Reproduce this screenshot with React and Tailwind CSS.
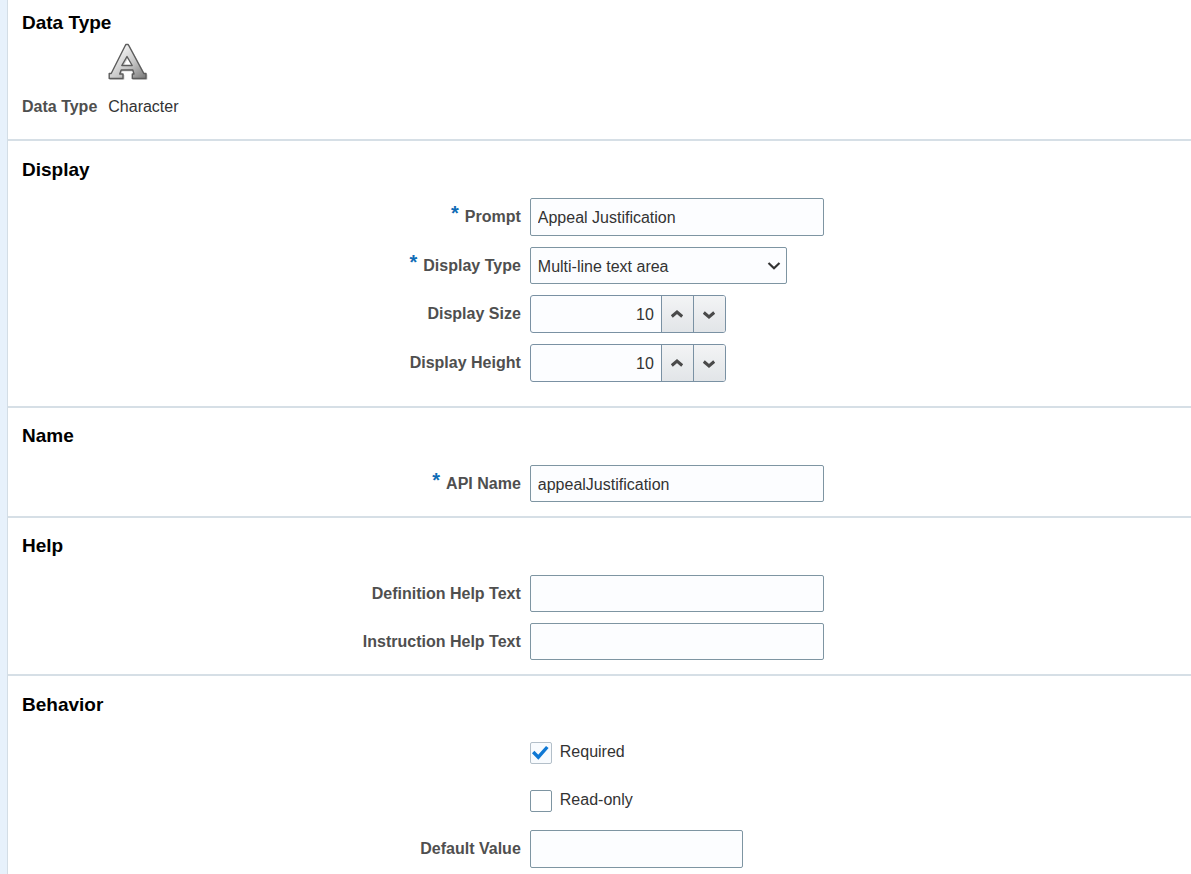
import { useState } from "react"

const inputClass =
  "block rounded-[2px] border border-[#7e95a2] bg-[#fcfdff] px-[7px] pt-0.5 text-base text-[#333333] outline-none"

function Section({ title, className, children }) {
  return (
    <section className={`border-b-2 border-[#d6dfe6] pl-3.5 last:border-b-0 ${className}`}>
      <h2 className="text-[19px] leading-6 font-bold text-black">{title}</h2>
      {children}
    </section>
  )
}

function Field({ id, label, required, children }) {
  return (
    <div className="grid grid-cols-[43fr_57fr] items-center gap-x-[9px]">
      <div className="text-right leading-6 font-bold text-[#4f4f4f]">
        {required ? <span className="mr-1.5 align-[2px] text-xl leading-4 text-[#0f6cb6]">*</span> : null}
        {label ? <label htmlFor={id}>{label}</label> : null}
      </div>
      <div className="flex items-center">{children}</div>
    </div>
  )
}

function Chevron({ up }) {
  return (
    <svg viewBox="0 0 14 10" className="h-2.5 w-3.5" fill="none" stroke="#4a4a4a" strokeWidth="3">
      <path d={up ? "M1.8 7.5 7 3l5.2 4.5" : "M1.8 3.5 7 8l5.2-4.5"} />
    </svg>
  )
}

function Spinner({ id, label, value, onChange }) {
  const buttonClass =
    "flex w-8 items-center justify-center border-l border-[#7a91a3] bg-linear-to-b from-[#f3f4f5] to-[#e2e5e8]"

  return (
    <div className="flex h-[38px] overflow-hidden rounded-[3px] border border-[#7a91a3] bg-[#fcfdff]">
      <input
        id={id}
        type="text"
        inputMode="numeric"
        className="w-[130px] px-[7px] pt-0.5 text-right text-base text-[#333333] outline-none"
        value={value}
        onChange={(event) => onChange(Number(event.target.value) || 0)}
      />
      <button type="button" aria-label={`Increase ${label}`} className={buttonClass} onClick={() => onChange(value + 1)}>
        <Chevron up />
      </button>
      <button type="button" aria-label={`Decrease ${label}`} className={buttonClass} onClick={() => onChange(value - 1)}>
        <Chevron />
      </button>
    </div>
  )
}

function Checkbox({ id, label, checked, onChange }) {
  return (
    <div className="flex h-[37px] items-center gap-2">
      <span className="relative size-[22px]">
        <input
          id={id}
          type="checkbox"
          className="peer block size-[22px] appearance-none rounded-[2px] border border-[#7e95a2] bg-white checked:border-[#b3bfc9] checked:bg-[#f8fbfe]"
          checked={checked}
          onChange={(event) => onChange(event.target.checked)}
        />
        <svg
          viewBox="0 0 22 22"
          className="pointer-events-none absolute inset-0 hidden size-[22px] peer-checked:block"
          fill="none"
          stroke="#0f78d4"
          strokeWidth="3.4"
        >
          <path d="M3.2 10 8.3 15.2 17.3 5" />
        </svg>
      </span>
      <label htmlFor={id} className="pb-0.5 leading-6 text-[#333333]">
        {label}
      </label>
    </div>
  )
}

function CharacterIcon() {
  return (
    <svg viewBox="0 0 40 40" className="size-10" aria-hidden="true">
      <defs>
        <linearGradient id="letterFill" x1="0" y1="0" x2="1" y2="1">
          <stop offset="0.2" stopColor="#f4f4f4" />
          <stop offset="0.6" stopColor="#c4c4c4" />
          <stop offset="1" stopColor="#777777" />
        </linearGradient>
      </defs>
      <g fillRule="evenodd" strokeLinejoin="round">
        <path
          d="M17.8 1.5H20.2L35.8 30.5H38V35.5H24.3V31H26L24.8 27H13.2L11.7 31H15V35.5H1.2V30.5H3.2ZM19 13.5 13.8 22.5H24.2Z"
          transform="translate(1 1)"
          fill="#cccccc"
          stroke="#d4d4d4"
        />
        <path
          d="M17.8 1.5H20.2L35.8 30.5H38V35.5H24.3V31H26L24.8 27H13.2L11.7 31H15V35.5H1.2V30.5H3.2ZM19 13.5 13.8 22.5H24.2Z"
          fill="url(#letterFill)"
          stroke="#5c5c5c"
          strokeWidth="1.4"
        />
      </g>
    </svg>
  )
}

function App() {
  const [prompt, setPrompt] = useState("Appeal Justification")
  const [displayType, setDisplayType] = useState("Multi-line text area")
  const [displaySize, setDisplaySize] = useState(10)
  const [displayHeight, setDisplayHeight] = useState(10)
  const [apiName, setApiName] = useState("appealJustification")
  const [definitionHelp, setDefinitionHelp] = useState("")
  const [instructionHelp, setInstructionHelp] = useState("")
  const [required, setRequired] = useState(true)
  const [readOnly, setReadOnly] = useState(false)
  const [defaultValue, setDefaultValue] = useState("")

  return (
    <div className="flex min-h-screen bg-white font-['Liberation_Sans',Arial,sans-serif] text-base">
      <div className="w-2 shrink-0 border-r border-[#d3dde5] bg-[#e7f1fb]" />
      <main className="min-w-0 flex-1">
        <Section title="Data Type" className="pt-[11px] pb-5">
          <dl className="mt-2 flex items-end gap-[11px] leading-6">
            <dt className="font-bold text-[#4f4f4f]">Data Type</dt>
            <dd className="text-[#333333]">
              <CharacterIcon />
              <p className="mt-3">Character</p>
            </dd>
          </dl>
        </Section>

        <Section title="Display" className="pt-[17px] pb-6">
          <div className="mt-4 flex flex-col gap-[11px]">
            <Field id="prompt" label="Prompt" required>
              <input
                id="prompt"
                type="text"
                className={`${inputClass} h-[38px] w-[294px]`}
                value={prompt}
                onChange={(event) => setPrompt(event.target.value)}
              />
            </Field>
            <Field id="displayType" label="Display Type" required>
              <div className="relative">
                <select
                  id="displayType"
                  className={`${inputClass} h-[37px] w-[257px] appearance-none`}
                  value={displayType}
                  onChange={(event) => setDisplayType(event.target.value)}
                >
                  <option>Multi-line text area</option>
                  <option>Simple text box</option>
                </select>
                <svg
                  viewBox="0 0 14 10"
                  className="pointer-events-none absolute top-3.5 right-1.5 h-2.5 w-3.5"
                  fill="none"
                  stroke="#333333"
                  strokeWidth="2.2"
                >
                  <path d="M1.5 2 7 7.2 12.5 2" />
                </svg>
              </div>
            </Field>
            <Field id="displaySize" label="Display Size">
              <Spinner id="displaySize" label="Display Size" value={displaySize} onChange={setDisplaySize} />
            </Field>
            <Field id="displayHeight" label="Display Height">
              <Spinner id="displayHeight" label="Display Height" value={displayHeight} onChange={setDisplayHeight} />
            </Field>
          </div>
        </Section>

        <Section title="Name" className="pt-4 pb-3.5">
          <div className="mt-[17px]">
            <Field id="apiName" label="API Name" required>
              <input
                id="apiName"
                type="text"
                className={`${inputClass} h-[37px] w-[294px]`}
                value={apiName}
                onChange={(event) => setApiName(event.target.value)}
              />
            </Field>
          </div>
        </Section>

        <Section title="Help" className="pt-4 pb-3.5">
          <div className="mt-[17px] flex flex-col gap-[11px]">
            <Field id="definitionHelp" label="Definition Help Text">
              <input
                id="definitionHelp"
                type="text"
                className={`${inputClass} h-[37px] w-[294px]`}
                value={definitionHelp}
                onChange={(event) => setDefinitionHelp(event.target.value)}
              />
            </Field>
            <Field id="instructionHelp" label="Instruction Help Text">
              <input
                id="instructionHelp"
                type="text"
                className={`${inputClass} h-[37px] w-[294px]`}
                value={instructionHelp}
                onChange={(event) => setInstructionHelp(event.target.value)}
              />
            </Field>
          </div>
        </Section>

        <Section title="Behavior" className="pt-[17px]">
          <div className="mt-[17px] flex flex-col gap-[11px]">
            <Field>
              <Checkbox id="required" label="Required" checked={required} onChange={setRequired} />
            </Field>
            <Field>
              <Checkbox id="readOnly" label="Read-only" checked={readOnly} onChange={setReadOnly} />
            </Field>
            <Field id="defaultValue" label="Default Value">
              <input
                id="defaultValue"
                type="text"
                className={`${inputClass} h-[38px] w-[213px]`}
                value={defaultValue}
                onChange={(event) => setDefaultValue(event.target.value)}
              />
            </Field>
          </div>
        </Section>
      </main>
    </div>
  )
}

export default App
